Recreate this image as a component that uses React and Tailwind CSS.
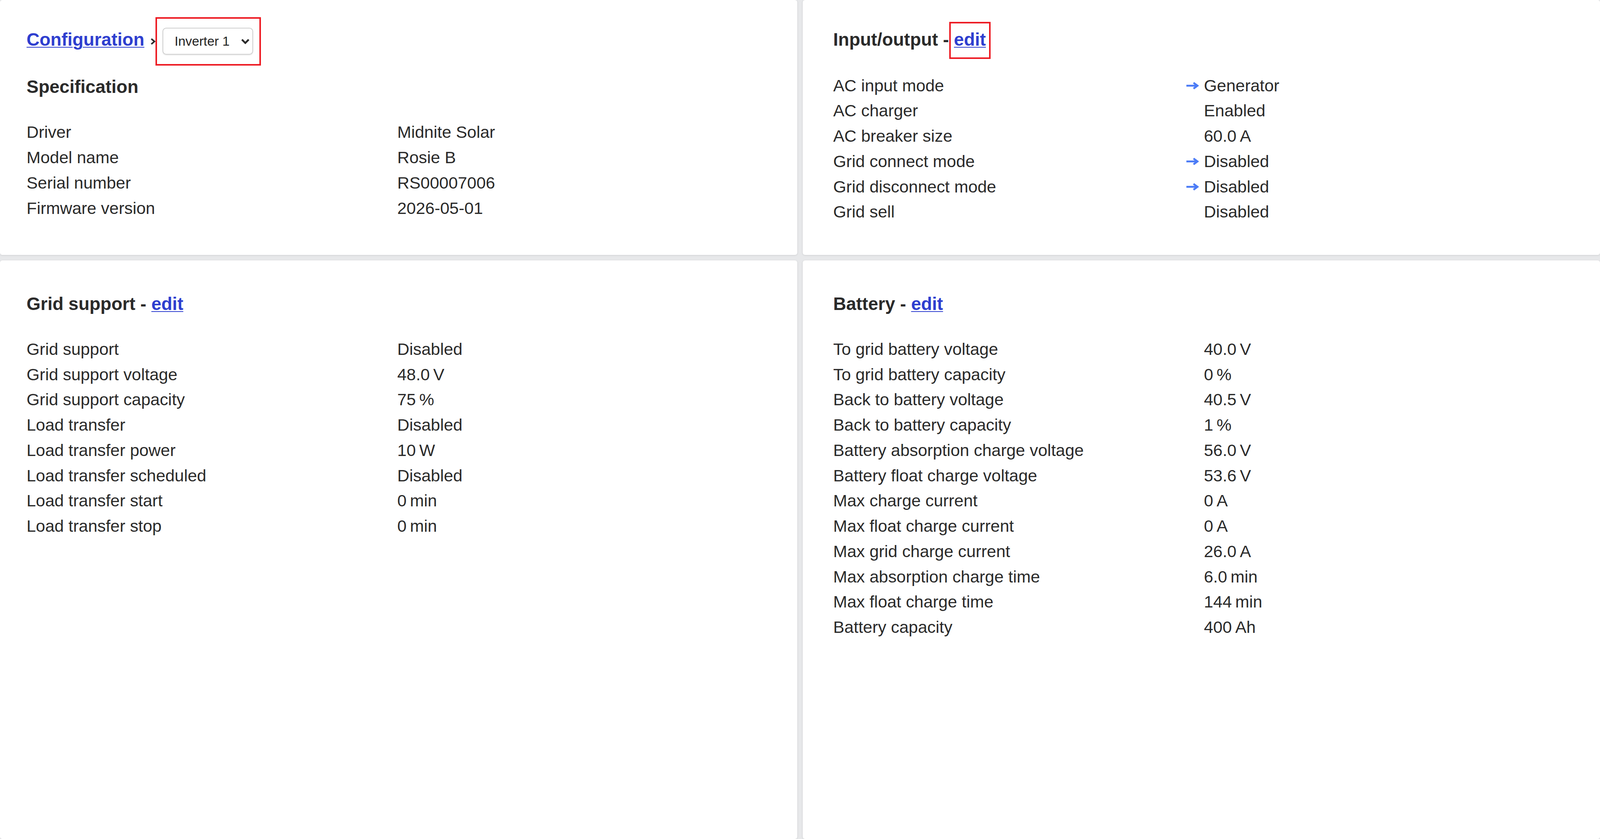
import React from "react";

const N = "\u202F";

const spec = [
  ["Driver", "Midnite Solar"],
  ["Model name", "Rosie B"],
  ["Serial number", "RS00007006"],
  ["Firmware version", "2026-05-01"],
];

const io = [
  ["AC input mode", "Generator", true],
  ["AC charger", "Enabled"],
  ["AC breaker size", `60.0${N}A`],
  ["Grid connect mode", "Disabled", true],
  ["Grid disconnect mode", "Disabled", true],
  ["Grid sell", "Disabled"],
];

const gridSupport = [
  ["Grid support", "Disabled"],
  ["Grid support voltage", `48.0${N}V`],
  ["Grid support capacity", `75${N}%`],
  ["Load transfer", "Disabled"],
  ["Load transfer power", `10${N}W`],
  ["Load transfer scheduled", "Disabled"],
  ["Load transfer start", `0${N}min`],
  ["Load transfer stop", `0${N}min`],
];

const battery = [
  ["To grid battery voltage", `40.0${N}V`],
  ["To grid battery capacity", `0${N}%`],
  ["Back to battery voltage", `40.5${N}V`],
  ["Back to battery capacity", `1${N}%`],
  ["Battery absorption charge voltage", `56.0${N}V`],
  ["Battery float charge voltage", `53.6${N}V`],
  ["Max charge current", `0${N}A`],
  ["Max float charge current", `0${N}A`],
  ["Max grid charge current", `26.0${N}A`],
  ["Max absorption charge time", `6.0${N}min`],
  ["Max float charge time", `144${N}min`],
  ["Battery capacity", `400${N}Ah`],
];

const ArrowIcon = () => (
  <svg width="32" height="19" viewBox="0 0 40 24" fill="none">
    <path d="M0 12H35" stroke="#4b7bf6" strokeWidth="6" />
    <path d="M23 2.5L36 12L23 21.5" stroke="#4b7bf6" strokeWidth="6" />
  </svg>
);

const Rows = ({ items }) => (
  <div className="grid grid-cols-[904px_45px_1fr] items-center text-[42.9px] leading-[64.75px] text-[#2a2a2a]">
    {items.map(([label, value, arrow]) => (
      <React.Fragment key={label}>
        <div>{label}</div>
        <div className="flex items-center">{arrow && <ArrowIcon />}</div>
        <div>{value}</div>
      </React.Fragment>
    ))}
  </div>
);

const EditLink = ({ marked }) => (
  <span className="relative inline-block">
    <a href="#" className="text-[#2e3ecf] underline decoration-[2.4px] underline-offset-[3px]">
      edit
    </a>
    {marked && (
      <span className="absolute -left-[12px] -right-[12.5px] -top-[18px] -bottom-[22px] border-[4px] border-[#ed1c24]" />
    )}
  </span>
);

const Heading = ({ title, marked, className = "" }) => (
  <h2 className={`text-[46px] leading-[55.6px] font-bold text-[#2a2a2a] ${className}`}>
    {title} - <EditLink marked={marked} />
  </h2>
);

const Card = ({ right, className = "", children }) => (
  <div
    className={`bg-white rounded-[6px] shadow-[0_1px_4px_rgba(0,0,0,0.12)] ${
      right ? "pl-[78px]" : "pl-[68px]"
    } ${className}`}
  >
    {children}
  </div>
);

export default function App() {
  return (
    <div className="min-h-screen bg-[#e7e8ea] font-['Liberation_Sans',Arial,sans-serif]">
      <div className="grid min-h-screen grid-cols-2 grid-rows-[auto_1fr] gap-[14px]">
        <Card className="pt-[43.7px] pb-[78px]">
          <div className="flex items-center">
            <a
              href="#"
              className="pb-[9px] text-[46px] leading-[55.6px] font-bold text-[#2e3ecf] underline decoration-[2.4px] underline-offset-[3px]"
            >
              Configuration
            </a>
            <svg className="ml-[15px]" width="13.5" height="18.3" viewBox="0 0 17 23" fill="none">
              <path d="M3 3L13 11.5L3 20" stroke="#2a2a2a" strokeWidth="5" />
            </svg>
            <div className="border-[4px] border-[#ed1c24] pl-[13.5px] pr-[16.7px] py-[23.8px]">
              <div className="flex h-[69px] w-[232px] items-center justify-between rounded-[9.5px] border-[2.4px] border-[#cfcfcf] bg-white pl-[29.4px] pr-[7px] shadow-[0_2px_3px_rgba(0,0,0,0.08)]">
                <span className="text-[33.4px] leading-none text-[#222]">Inverter 1</span>
                <svg width="22" height="14.3" viewBox="0 0 28 18" fill="none">
                  <path d="M3 3L14 14L25 3" stroke="#2a2a2a" strokeWidth="6" />
                </svg>
              </div>
            </div>
          </div>
          <h2 className="mt-[27px] mb-[55.6px] text-[46px] leading-[55.6px] font-bold text-[#2a2a2a]">
            Specification
          </h2>
          <Rows items={spec} />
        </Card>

        <Card right className="pt-[73.9px] pb-[78px]">
          <Heading title="Input/output" marked className="mb-[57.2px]" />
          <Rows items={io} />
        </Card>

        <Card className="pt-[84.2px] pb-[68px]">
          <Heading title="Grid support" className="mb-[54.8px]" />
          <Rows items={gridSupport} />
        </Card>

        <Card right className="pt-[84.2px] pb-[68px]">
          <Heading title="Battery" className="mb-[54.8px]" />
          <Rows items={battery} />
        </Card>
      </div>
    </div>
  );
}
